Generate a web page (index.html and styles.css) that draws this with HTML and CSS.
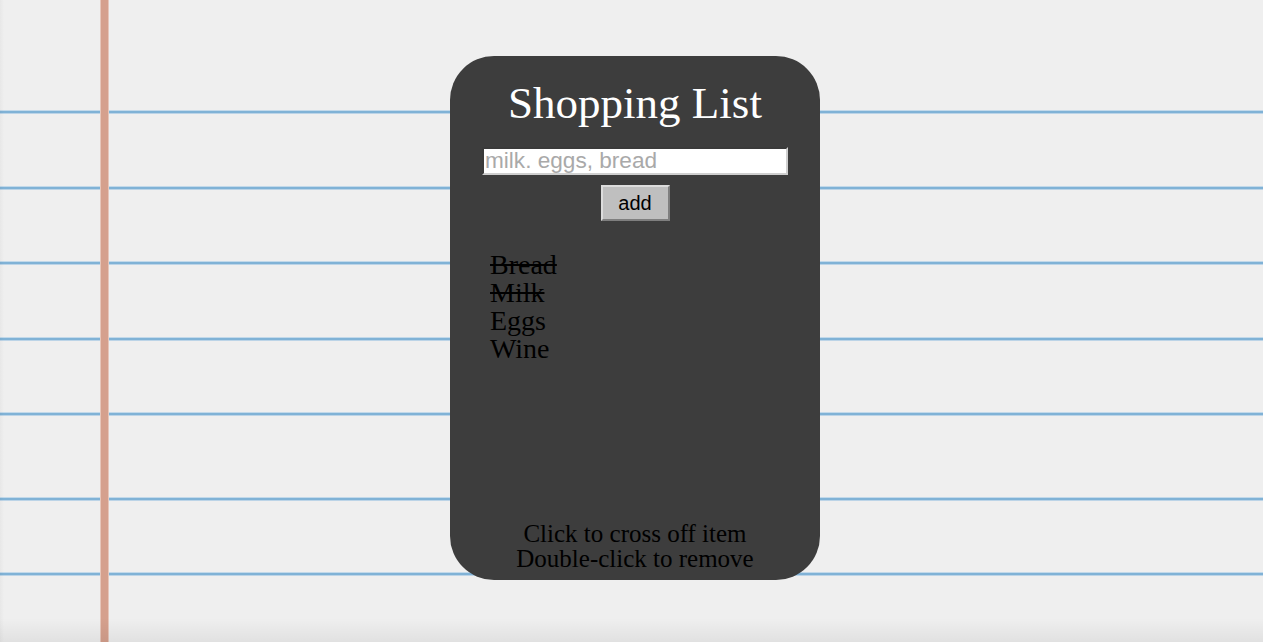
FILE: index.html
```html
<!DOCTYPE html>
<html lang="en">
<head>
<meta charset="utf-8">
<title>Shopping List</title>
<link rel="stylesheet" href="styles.css">
</head>
<body>
<div class="page">
  <main class="card">
    <h1 class="title">Shopping List</h1>
    <input class="entry" type="text" placeholder="milk. eggs, bread">
    <button class="add-btn" type="button">add</button>
    <ul class="items">
      <li class="item done">Bread</li>
      <li class="item done">Milk</li>
      <li class="item">Eggs</li>
      <li class="item">Wine</li>
    </ul>
    <p class="hint">Click to cross off item<br>Double-click to remove</p>
  </main>
</div>
</body>
</html>
```

FILE: styles.css
```css
html, body {
  margin: 0;
  height: 100%;
}

body {
  font-family: "Liberation Serif", "Times New Roman", serif;
  background-color: #efefef;
  background-image:
    linear-gradient(to bottom, rgba(0,0,0,0) 0, rgba(0,0,0,0) 618px, rgba(0,0,0,0.06) 642px),
    linear-gradient(to right, rgba(0,0,0,0.03) 0, rgba(0,0,0,0) 4px),
    linear-gradient(to right, transparent 100px, #e6c6ba 100px, #e6c6ba 101px, #d5a08d 101px, #d5a08d 108px, #e6c6ba 108px, #e6c6ba 109px, transparent 109px),
    linear-gradient(to bottom, #c2d9ea 0, #c2d9ea 1px, #80b2d6 1px, #80b2d6 3px, #bcd4e7 3px),
    linear-gradient(to bottom, #c2d9ea 0, #c2d9ea 1px, #80b2d6 1px, #80b2d6 3px, #bcd4e7 3px),
    linear-gradient(to bottom, #c2d9ea 0, #c2d9ea 1px, #80b2d6 1px, #80b2d6 3px, #bcd4e7 3px),
    linear-gradient(to bottom, #c2d9ea 0, #c2d9ea 1px, #80b2d6 1px, #80b2d6 3px, #bcd4e7 3px),
    linear-gradient(to bottom, #c2d9ea 0, #c2d9ea 1px, #80b2d6 1px, #80b2d6 3px, #bcd4e7 3px),
    linear-gradient(to bottom, #c2d9ea 0, #c2d9ea 1px, #80b2d6 1px, #80b2d6 3px, #bcd4e7 3px),
    linear-gradient(to bottom, #c2d9ea 0, #c2d9ea 1px, #80b2d6 1px, #80b2d6 3px, #bcd4e7 3px);
  background-repeat: no-repeat;
  background-size:
    100% 642px,
    4px 100%,
    100% 100%,
    100% 4px, 100% 4px, 100% 4px, 100% 4px, 100% 4px, 100% 4px, 100% 4px;
  background-position:
    0 0,
    0 0,
    0 0,
    0 110px, 0 186px, 0 261px, 0 337px, 0 412px, 0 497px, 0 572px;
}

.page {
  display: flex;
  justify-content: center;
  padding: 56px 0 0 7px;
}

.card {
  width: 370px;
  height: 524px;
  box-sizing: border-box;
  background: #3d3d3d;
  border-radius: 44px;
  padding: 21px 0 9px;
  display: flex;
  flex-direction: column;
  align-items: center;
}

.title {
  margin: 0;
  font-weight: normal;
  font-size: 45px;
  line-height: 52px;
  color: #ffffff;
}

.entry {
  margin: 18px 0 0;
  width: 306px;
  height: 28px;
  box-sizing: border-box;
  border: 2px inset #9a9a9a;
  border-color: #8e8e8e #cfcfcf #cfcfcf #8e8e8e;
  background: #ffffff;
  padding: 0 1px;
  font-family: "Liberation Sans", Arial, sans-serif;
  font-size: 22.6px;
  color: #000;
  outline: none;
}

.entry::placeholder {
  color: #a9a9a9;
}

.add-btn {
  margin: 10px 0 0;
  width: 69px;
  height: 36px;
  box-sizing: border-box;
  background: #bfbfbf;
  border: 2px solid;
  border-color: #dcdcdc #7f7f7f #7f7f7f #dcdcdc;
  padding: 0;
  font-family: "Liberation Sans", Arial, sans-serif;
  font-size: 20px;
  color: #000;
}

.items {
  list-style: none;
  margin: 30px 0 0;
  padding: 0 0 0 40px;
  align-self: stretch;
}

.item {
  font-size: 28px;
  line-height: 28px;
  color: #000;
}

.item.done {
  text-decoration: line-through;
}

.hint {
  margin: auto 0 0;
  text-align: center;
  font-size: 25px;
  line-height: 25px;
  color: #000;
}
```
